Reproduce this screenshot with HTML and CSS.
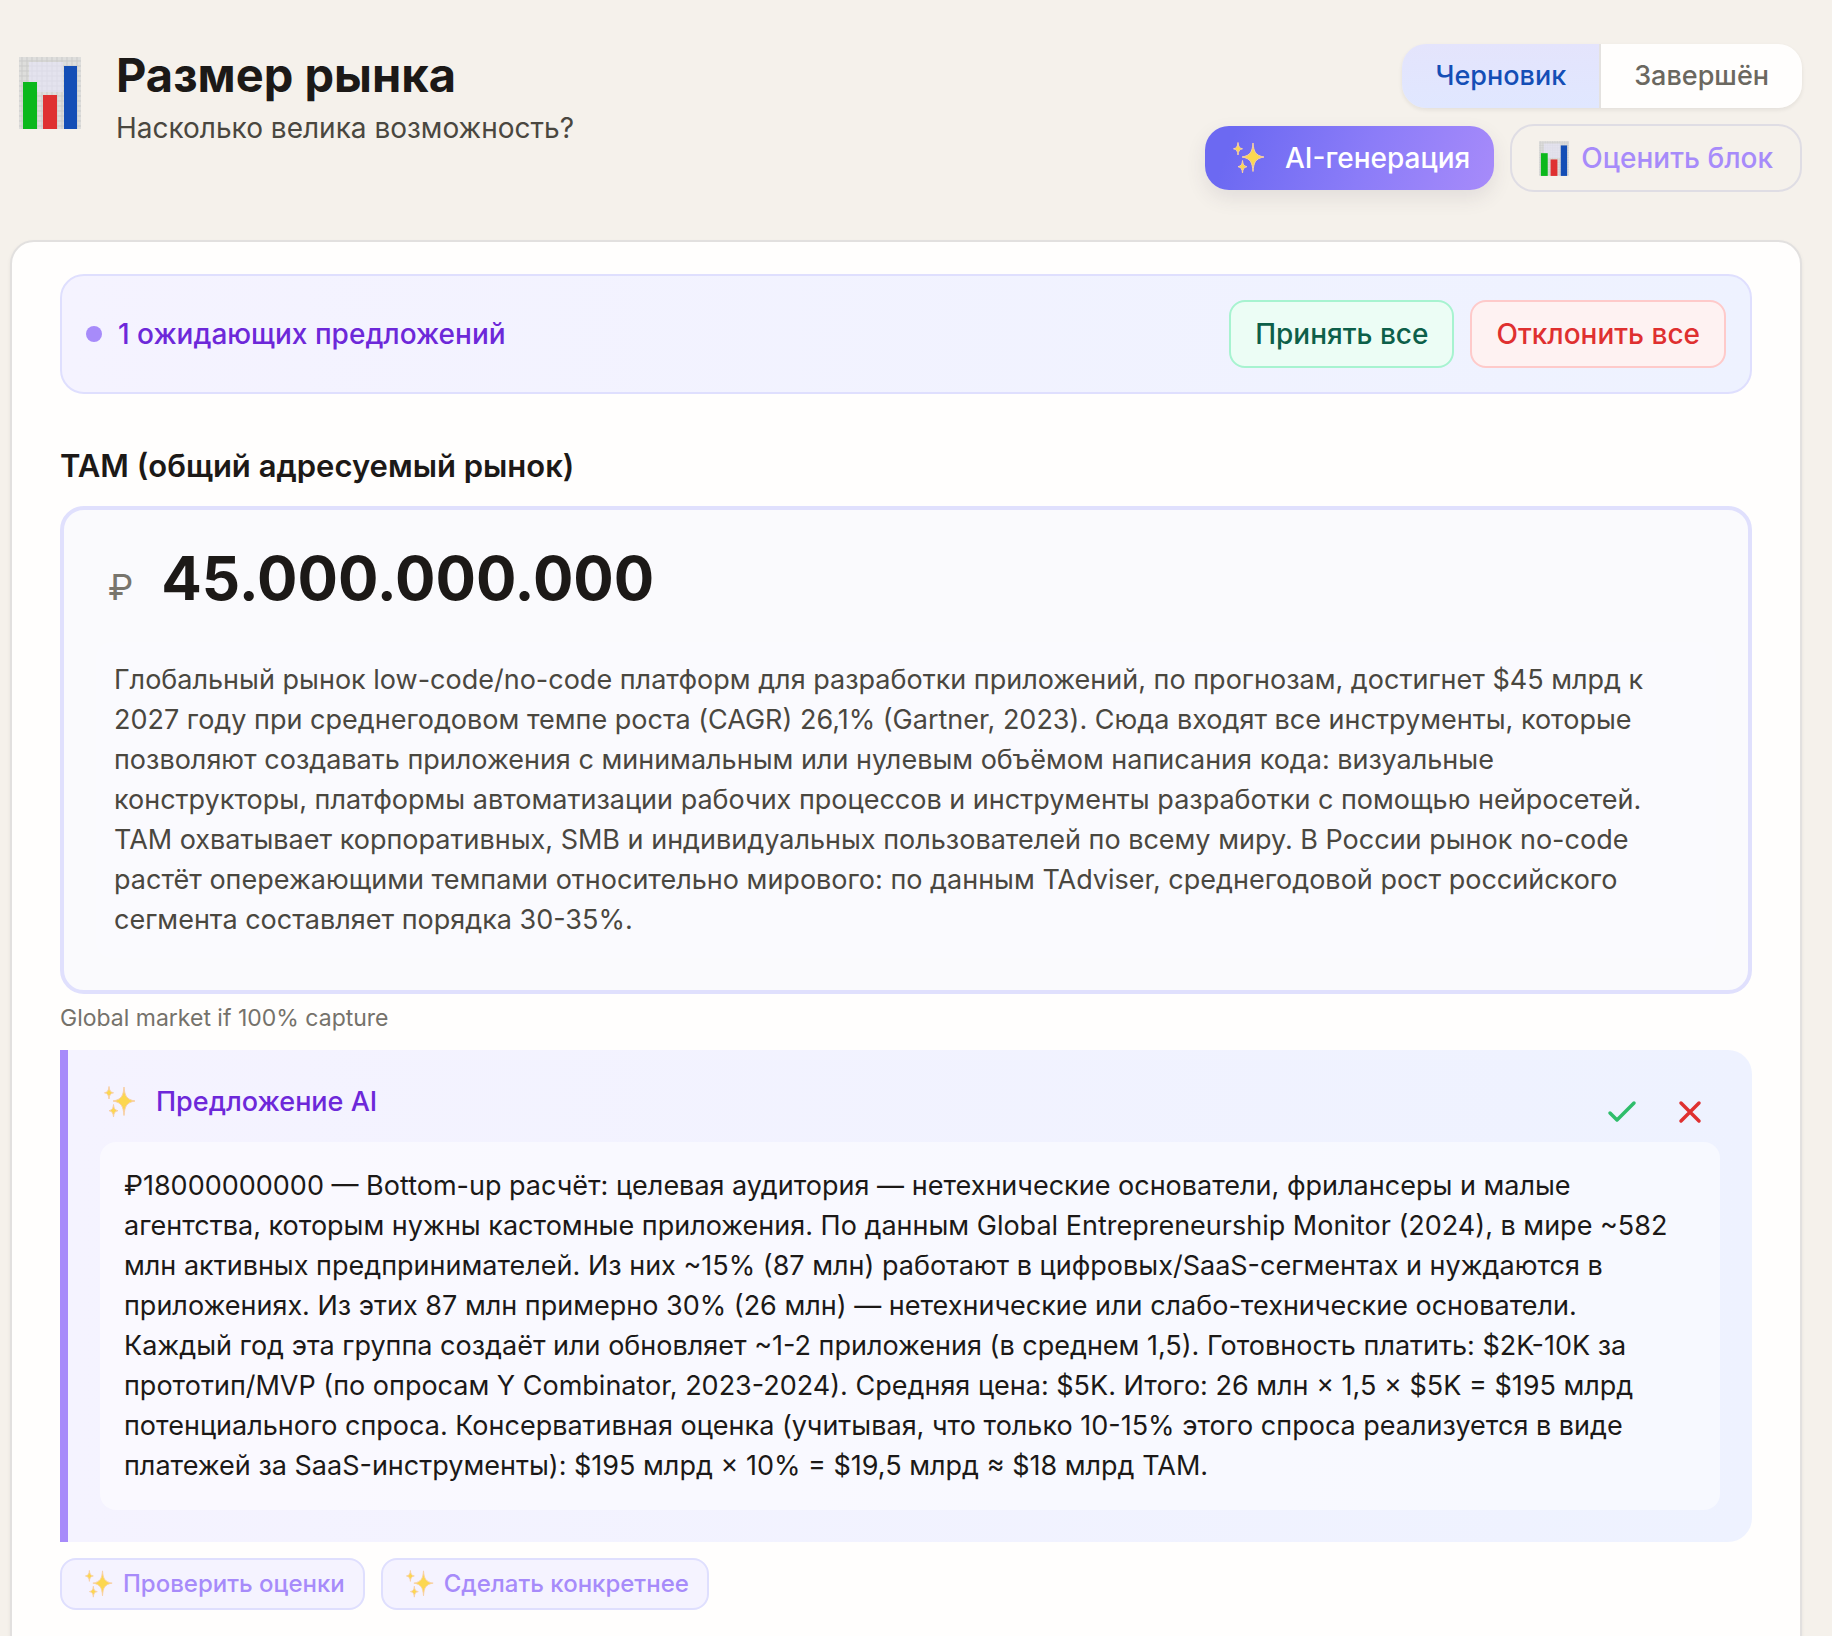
FILE: index.html
```
<!DOCTYPE html>
<html lang="ru">
<head>
    <meta charset="utf-8">
    <meta name="viewport" content="width=device-width, initial-scale=1">
    <title>Размер рынка</title>
    <link rel="stylesheet" href="styles.css">
</head>
<body>
    <!-- shared icons -->
    <svg class="sprite" aria-hidden="true">
        <symbol id="sparkles" viewBox="0 0 32 32">
            <g fill="#fcd750" stroke="#f8cfa6" stroke-width="1" stroke-linejoin="round">
                <path d="M20 1C20.8 10 22.500 13.500 31 15C22.500 16.500 20.800 20 20 29.500C19.200 20 17.500 16.500 9 15C17.500 13.500 19.200 10 20 1Z"/>
                <path d="M5 0.500C5.400 4.500 6.200 6 9.500 6.800C6.200 7.600 5.400 9.200 5 13C4.600 9.200 3.800 7.600 0.500 6.800C3.800 6 4.600 4.500 5 0.500Z"/>
                <path d="M9.500 18.500C9.900 22.500 10.700 24 14 24.700C10.700 25.400 9.900 27 9.500 31C9.100 27 8.300 25.400 5 24.700C8.300 24 9.100 22.500 9.500 18.500Z"/>
            </g>
        </symbol>
        <symbol id="chart" viewBox="0 0 62 72">
            <rect width="62" height="72" fill="#dededc"/>
            <path d="M0 4H62M0 9H62M0 14H62M0 19H62M0 24H62M0 29H62M0 34H62M0 39H62M0 44H62M0 49H62M0 54H62M0 59H62M0 64H62M0 69H62M3 0V72M8 0V72M13 0V72M18 0V72M23 0V72M28 0V72M33 0V72M38 0V72M43 0V72M48 0V72M53 0V72M58 0V72" stroke="#cbcbca" stroke-width="1"/>
            <rect x="10" y="5" width="34" height="30" fill="#e8e6fa" opacity=".6"/>
            <rect x="4" y="25" width="14" height="47" fill="#0bb81c"/>
            <rect x="24" y="38" width="14" height="34" fill="#df3131"/>
            <rect x="45" y="9" width="13" height="63" fill="#144eb6"/>
        </symbol>
    </svg>

    <header class="page-header">
        <div class="heading">
            <svg class="heading-icon" aria-hidden="true"><use href="#chart"/></svg>
            <div>
                <h1>Размер рынка</h1>
                <p class="subtitle">Насколько велика возможность?</p>
            </div>
        </div>
        <div class="controls">
            <div class="toggle">
                <button class="toggle-item active" type="button">Черновик</button>
                <button class="toggle-item" type="button">Завершён</button>
            </div>
            <div class="controls-row">
                <button class="btn btn-ai" type="button">
                    <svg class="icon-sparkles" aria-hidden="true"><use href="#sparkles"/></svg>AI-генерация
                </button>
                <button class="btn btn-rate" type="button">
                    <svg class="icon-chart" aria-hidden="true"><use href="#chart"/></svg>Оценить блок
                </button>
            </div>
        </div>
    </header>

    <main class="card">
        <div class="banner">
            <span class="dot"></span>
            <span class="banner-text">1 ожидающих предложений</span>
            <button class="btn btn-accept" type="button">Принять все</button>
            <button class="btn btn-reject" type="button">Отклонить все</button>
        </div>

        <section>
            <label class="field-label" for="tam">TAM (общий адресуемый рынок)</label>
            <div class="field">
                <div class="amount">
                    <span class="currency">₽</span>
                    <input id="tam" class="amount-input" type="text" inputmode="numeric" value="45.000.000.000">
                </div>
                <textarea class="description" rows="7" spellcheck="false" aria-label="Описание TAM">Глобальный рынок low-code/no-code платформ для разработки приложений, по прогнозам, достигнет $45 млрд к 2027 году при среднегодовом темпе роста (CAGR) 26,1% (Gartner, 2023). Сюда входят все инструменты, которые позволяют создавать приложения с минимальным или нулевым объёмом написания кода: визуальные конструкторы, платформы автоматизации рабочих процессов и инструменты разработки с помощью нейросетей. TAM охватывает корпоративных, SMB и индивидуальных пользователей по всему миру. В России рынок no-code растёт опережающими темпами относительно мирового: по данным TAdviser, среднегодовой рост российского сегмента составляет порядка 30-35%.</textarea>
            </div>
            <p class="hint">Global market if 100% capture</p>

            <div class="suggestion">
                <div class="suggestion-header">
                    <h2><svg class="icon-sparkles" aria-hidden="true"><use href="#sparkles"/></svg>Предложение AI</h2>
                    <div class="suggestion-actions">
                        <button class="icon-btn accept" type="button" aria-label="Принять">
                            <svg viewBox="0 0 32 32" aria-hidden="true"><path d="M4 17l7 7L28 7"/></svg>
                        </button>
                        <button class="icon-btn reject" type="button" aria-label="Отклонить">
                            <svg viewBox="0 0 32 32" aria-hidden="true"><path d="M7 7l18 18M25 7L7 25"/></svg>
                        </button>
                    </div>
                </div>
                <p class="suggestion-text">₽18000000000 — Bottom-up расчёт: целевая аудитория — нетехнические основатели, фрилансеры и малые агентства, которым нужны кастомные приложения. По данным Global Entrepreneurship Monitor (2024), в мире ~582 млн активных предпринимателей. Из них ~15% (87 млн) работают в цифровых/SaaS-сегментах и нуждаются в приложениях. Из этих 87 млн примерно 30% (26 млн) — нетехнические или слабо-технические основатели. Каждый год эта группа создаёт или обновляет ~1-2 приложения (в среднем 1,5). Готовность платить: $2K-10K за прототип/MVP (по опросам Y Combinator, 2023-2024). Средняя цена: $5K. Итого: 26 млн × 1,5 × $5K = $195 млрд потенциального спроса. Консервативная оценка (учитывая, что только 10-15% этого спроса реализуется в виде платежей за SaaS-инструменты): $195 млрд × 10% = $19,5 млрд ≈ $18 млрд TAM.</p>
            </div>

            <div class="chips">
                <button class="chip" type="button"><svg class="icon-sparkles" aria-hidden="true"><use href="#sparkles"/></svg>Проверить оценки</button>
                <button class="chip" type="button"><svg class="icon-sparkles" aria-hidden="true"><use href="#sparkles"/></svg>Сделать конкретнее</button>
            </div>
        </section>
    </main>
</body>
</html>
```
FILE: styles.css
```
* {
    box-sizing: border-box;
}
body {
    margin: 0;
    padding: 44px 30px 0 10px;
    background: #f5f1eb;
    color: #1c1917;
    font-family: Inter, "Liberation Sans", sans-serif;
    font-size: 28px;
    line-height: 40px;
}
h1, h2, p {
    margin: 0;
}
button, input, textarea {
    font: inherit;
}
button {
    cursor: pointer;
}
.sprite {
    display: none;
}

/* header */
.page-header {
    display: flex;
    justify-content: space-between;
    align-items: flex-start;
    margin-bottom: 48px;
}
.heading {
    display: flex;
    align-items: flex-start;
    gap: 35px;
    padding-left: 9px;
}
.heading-icon {
    width: 62px;
    height: 72px;
    margin-top: 13px;
}
h1 {
    font-size: 47px;
    line-height: 62px;
    font-weight: 700;
}
.subtitle {
    margin-top: 2px;
    color: #4a473f;
}
.controls {
    display: flex;
    flex-direction: column;
    align-items: flex-end;
    gap: 16px;
}
.controls-row {
    display: flex;
    align-items: center;
    gap: 16px;
}
.toggle {
    display: flex;
    border-radius: 24px;
    overflow: hidden;
    box-shadow: 0 2px 4px rgba(28, 25, 23, 0.08);
}
.toggle-item {
    height: 64px;
    padding: 0 33px;
    border: none;
    background: #fffefd;
    color: #6b6860;
    font-size: 27px;
    font-weight: 500;
}
.toggle-item + .toggle-item {
    border-left: 2px solid #e4e2e0;
}
.toggle-item.active {
    background: linear-gradient(#e4e4fc, #e0e7ff);
    color: #144eb6;
}

/* buttons */
.btn {
    display: flex;
    align-items: center;
    height: 68px;
    padding: 0 24px;
    border: 2px solid transparent;
    border-radius: 16px;
    font-weight: 500;
    white-space: nowrap;
}
.btn-ai {
    gap: 20px;
    height: 64px;
    padding-left: 28px;
    border: none;
    border-radius: 24px;
    background: linear-gradient(110deg, #6c69f2 10%, #8b7cf8 55%, #a78bfa);
    color: #fff;
    box-shadow: 0 8px 20px rgba(60, 50, 80, 0.1);
}
.btn-rate {
    gap: 12px;
    padding: 0 27px;
    border-color: #dfdde4;
    border-radius: 24px;
    background: transparent;
    color: #a78bfa;
}
.btn-accept {
    border-color: #a7f3d0;
    background: #ecfdf5;
    color: #0d5f49;
}
.btn-reject {
    border-color: #fecaca;
    background: #fef2f2;
    color: #df3030;
}
.icon-sparkles {
    flex: none;
    width: 32px;
    height: 32px;
}
.icon-chart {
    width: 30px;
    height: 35px;
}

/* card */
.card {
    padding: 32px 48px 48px;
    border: 2px solid #e2e0df;
    border-radius: 24px;
    background: #fffefd;
    box-shadow: 0 2px 4px rgba(28, 25, 23, 0.06);
}
.banner {
    display: flex;
    align-items: center;
    gap: 16px;
    margin-bottom: 48px;
    padding: 24px;
    border: 2px solid #dfdffe;
    border-radius: 24px;
    background: linear-gradient(90deg, #f5f3ff, #eef2ff);
}
.dot {
    width: 16px;
    height: 16px;
    border-radius: 50%;
    background: #a78bfa;
}
.banner-text {
    flex: 1;
    color: #6d28d9;
    font-weight: 500;
}

/* field */
.field-label {
    display: block;
    margin-bottom: 16px;
    font-size: 31px;
    line-height: 48px;
    font-weight: 600;
}
.field {
    padding: 32px;
    border: 4px solid #e0e0fd;
    border-radius: 24px;
    background: #fafafd;
}
.amount {
    display: flex;
    align-items: baseline;
    gap: 28px;
    margin-bottom: 28px;
    padding-left: 12px;
}
.currency {
    color: #78756d;
    font-size: 36px;
}
.amount-input {
    flex: 1;
    min-width: 0;
    height: 72px;
    padding: 0;
    border: none;
    background: none;
    color: #1c1917;
    font-size: 60px;
    font-weight: 700;
}
.description {
    display: block;
    width: 100%;
    padding: 18px 32px 18px 18px;
    border: none;
    border-radius: 16px;
    background: #fafafe;
    color: #4a473f;
    font-size: 27px;
    resize: none;
    overflow: hidden;
}
.hint {
    margin: 8px 0 16px;
    color: #75726b;
    font-size: 23px;
    line-height: 32px;
}

/* suggestion */
.suggestion {
    padding: 32px;
    border-left: 8px solid #a78bfa;
    border-radius: 0 24px 24px 0;
    background: linear-gradient(90deg, #f5f3ff, #eef2ff);
}
.suggestion-header {
    display: flex;
    justify-content: space-between;
    align-items: flex-start;
}
h2 {
    display: flex;
    align-items: center;
    gap: 20px;
    padding-left: 4px;
    color: #6d28d9;
    font-size: 27px;
    font-weight: 500;
}
.suggestion-actions {
    display: flex;
    gap: 8px;
}
.icon-btn {
    display: flex;
    align-items: center;
    justify-content: center;
    width: 60px;
    height: 60px;
    padding: 0;
    border: none;
    border-radius: 12px;
    background: none;
}
.icon-btn svg {
    width: 32px;
    height: 32px;
    fill: none;
    stroke: currentColor;
    stroke-width: 3.5;
    stroke-linecap: round;
    stroke-linejoin: round;
}
.icon-btn.accept {
    color: #2fbd6b;
}
.icon-btn.reject {
    color: #df3030;
}
.suggestion-text {
    padding: 24px 32px 24px 24px;
    border-radius: 16px;
    background: rgba(255, 255, 255, 0.5);
    font-size: 27px;
}

/* chips */
.chips {
    display: flex;
    gap: 16px;
    margin-top: 16px;
}
.chip {
    display: flex;
    align-items: center;
    gap: 10px;
    height: 52px;
    padding: 0 18px 0 23px;
    border: 2px solid #dfdffe;
    border-radius: 16px;
    background: #f5f3ff;
    color: #a78bfa;
    font-size: 24px;
    font-weight: 500;
}
.chip .icon-sparkles {
    width: 28px;
    height: 28px;
}
```
